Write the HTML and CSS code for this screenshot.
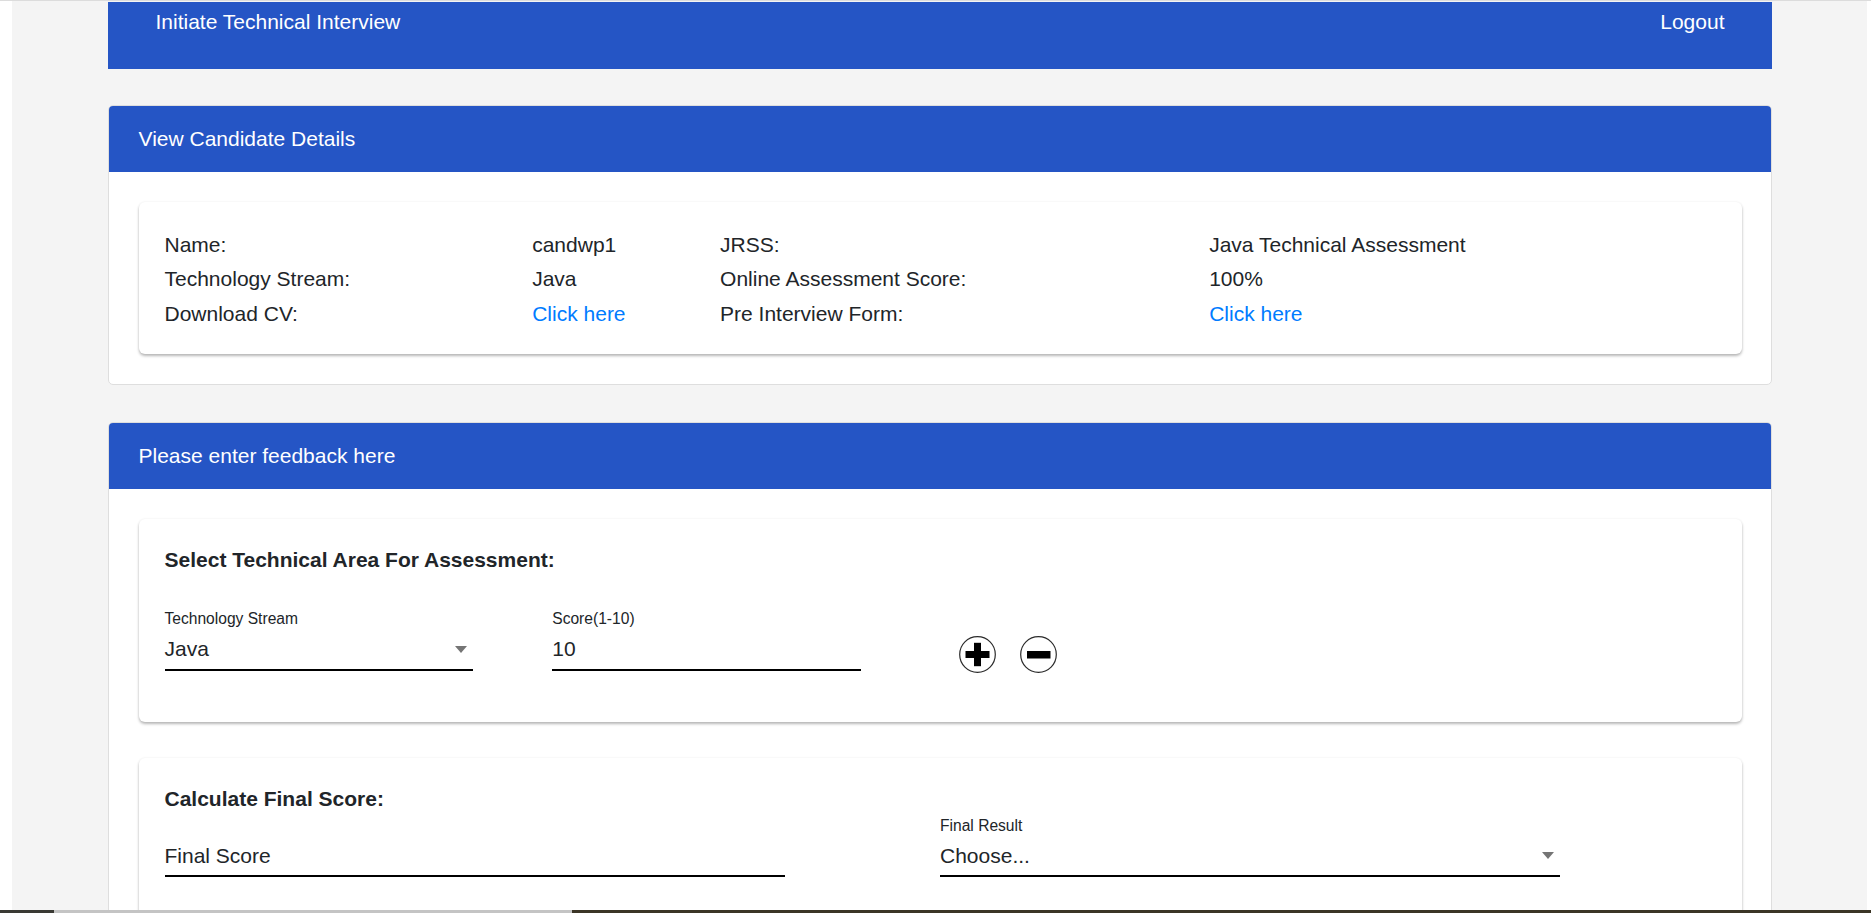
FILE: index.html
```html
<!DOCTYPE html>
<html lang="en">
<head>
    <meta charset="UTF-8">
    <title>Initiate Technical Interview</title>
    <link rel="stylesheet" href="styles.css">
</head>
<body>
    <div class="page">
        <div class="wrap">
            <div class="topbar">
                <span>Initiate Technical Interview</span>
                <a class="logout" href="#">Logout</a>
            </div>

            <section class="card">
                <div class="card-header">View Candidate Details</div>
                <div class="card-body">
                    <div class="panel details">
                        <span>Name:</span><span>candwp1</span>
                        <span>JRSS:</span><span>Java Technical Assessment</span>
                        <span>Technology Stream:</span><span>Java</span>
                        <span>Online Assessment Score:</span><span>100%</span>
                        <span>Download CV:</span><a href="#">Click here</a>
                        <span>Pre Interview Form:</span><a href="#">Click here</a>
                    </div>
                </div>
            </section>

            <section class="card">
                <div class="card-header">Please enter feedback here</div>
                <div class="card-body">
                    <div class="panel">
                        <h5 class="panel-title">Select Technical Area For Assessment:</h5>
                        <div class="area-row">
                            <div class="col">
                                <label>Technology Stream</label>
                                <div class="field select"><span>Java</span><i class="caret"></i></div>
                            </div>
                            <div class="col">
                                <label>Score(1-10)</label>
                                <div class="field">10</div>
                            </div>
                            <div class="col actions">
                                <svg class="round-btn" viewBox="0 0 37 37" width="37" height="37">
                                    <circle cx="18.5" cy="18.5" r="17.8" fill="#fff" stroke="#2b2b2b" stroke-width="1.2"/>
                                    <rect x="6.5" y="15" width="24" height="7" fill="#000"/>
                                    <rect x="15" y="6.8" width="7" height="23.4" fill="#000"/>
                                </svg>
                                <svg class="round-btn" viewBox="0 0 37 37" width="37" height="37">
                                    <circle cx="18.5" cy="18.5" r="17.8" fill="#fff" stroke="#2b2b2b" stroke-width="1.2"/>
                                    <rect x="7" y="15" width="23.5" height="7.5" fill="#000"/>
                                </svg>
                            </div>
                        </div>
                    </div>

                    <div class="panel">
                        <h5 class="panel-title">Calculate Final Score:</h5>
                        <div class="final-row">
                            <div class="col">
                                <div class="field">Final Score</div>
                            </div>
                            <div class="col">
                                <label>Final Result</label>
                                <div class="field select"><span>Choose...</span><i class="caret"></i></div>
                            </div>
                        </div>
                    </div>
                </div>
            </section>
        </div>
    </div>
    <div class="screen-edge"></div>
</body>
</html>
```

FILE: styles.css
```css
body {
    margin: 0;
    background: #fff;
    border-top: 1px solid #dcdcdc;
    font-family: 'Liberation Sans', Arial, sans-serif;
    font-size: 21px;
    line-height: 30.75px;
    color: #212529;
}
.page {
    margin: 0 4px 0 12px;
    padding-top: 1px;
    background: #f4f4f4;
    min-height: 1200px;
}
.wrap {
    width: 1664px;
    margin: 0 auto;
}
.topbar {
    display: flex;
    justify-content: space-between;
    height: 67px;
    box-sizing: border-box;
    padding: 5px 47px 0 48px;
    background: #2555c5;
    color: #fff;
}
.logout {
    color: #fff;
    text-decoration: none;
}
.card {
    margin-top: 36px;
    background: #fff;
    border: 1px solid #dedede;
    border-radius: 5px;
}
.card + .card {
    margin-top: 37px;
}
.card-header {
    background: #2555c5;
    color: #fff;
    padding: 18px 30px 17px 30px;
    border-radius: 4px 4px 0 0;
}
.card-body {
    padding: 30px 29px 30px 30px;
}
.panel {
    background: #fff;
    border-radius: 6px;
    box-shadow: 0 2px 3px rgba(0, 0, 0, 0.28), 0 0 3px rgba(0, 0, 0, 0.05);
    padding: 26px 26px 49px 26px;
}
.panel + .panel {
    margin-top: 36px;
}
.details {
    display: grid;
    grid-template-columns: 367.7px 187.9px 489.1px 1fr;
    line-height: 34.4px;
    padding: 26px 26px 23px 26px;
}
.details a {
    color: #007bff;
    text-decoration: none;
}
.panel-title {
    margin: 0;
    font-size: 21px;
    font-weight: bold;
    line-height: 30.75px;
}
.area-row {
    display: grid;
    grid-template-columns: repeat(4, 1fr);
    margin-top: 32px;
}
.final-row {
    display: grid;
    grid-template-columns: 1fr 1fr;
    align-items: end;
    margin-top: -1.5px;
}
label {
    display: block;
    font-size: 15.6px;
    line-height: 23.1px;
}
.field {
    width: 79.5%;
    padding: 3.7px 0 4.4px 0;
    border-bottom: 2px solid #000;
}
.final-row .field {
    width: 80%;
    padding-bottom: 3.4px;
}
.select {
    display: flex;
    align-items: center;
    justify-content: space-between;
}
.caret {
    width: 0;
    height: 0;
    margin-right: 6px;
    border-left: 6.5px solid transparent;
    border-right: 6.5px solid transparent;
    border-top: 7px solid #757575;
}
.actions {
    display: flex;
    gap: 24px;
    padding: 29px 0 0 19px;
}
.round-btn {
    display: block;
}
.screen-edge {
    position: fixed;
    left: 0;
    right: 0;
    bottom: 0;
    height: 3px;
    background: linear-gradient(90deg, #3a3a34 0, #3a3a34 54px, #c4c4c4 54px, #c4c4c4 572px, #3b3526 572px, #3b3526 100%);
}
```
